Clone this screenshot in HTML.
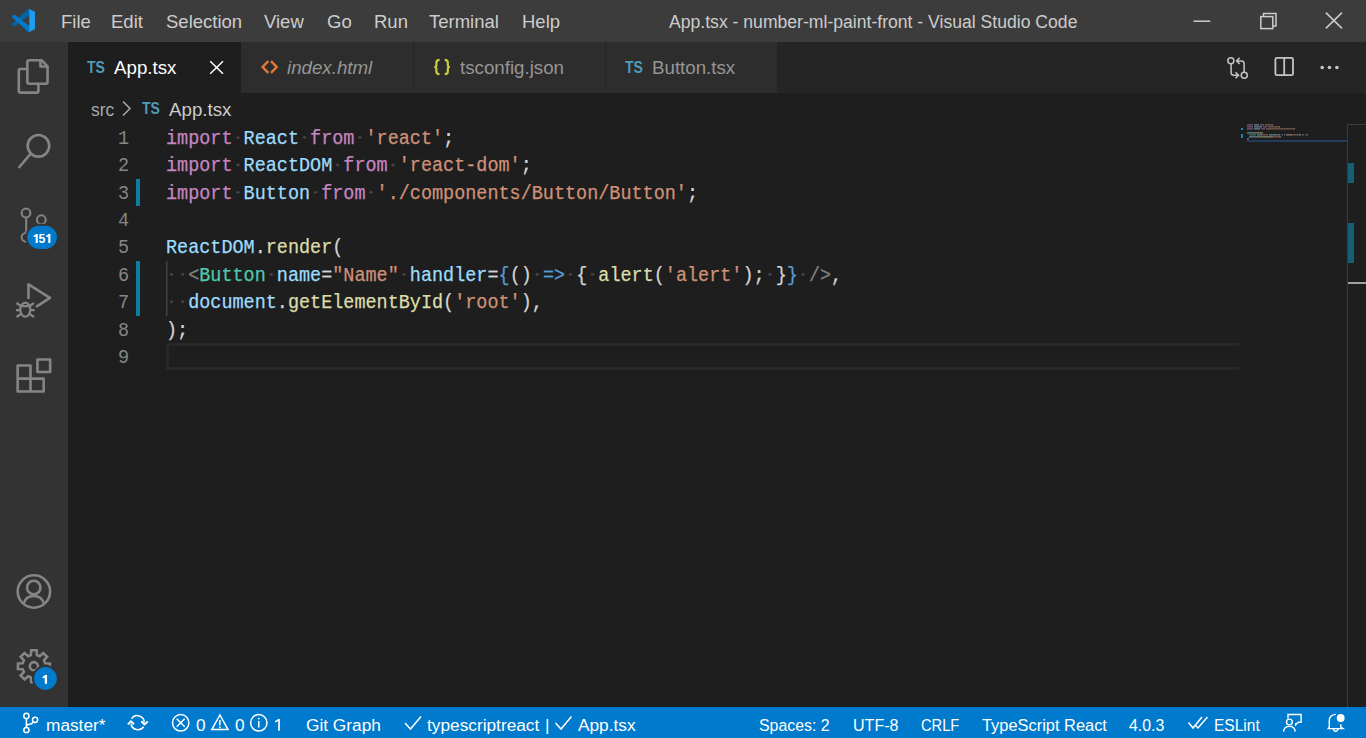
<!DOCTYPE html>
<html><head><meta charset="utf-8">
<style>
*{margin:0;padding:0;box-sizing:border-box}
html,body{width:1366px;height:738px;overflow:hidden;background:#1e1e1e;font-family:"Liberation Sans",sans-serif}
.a{position:absolute;white-space:pre}
.r{position:absolute}
.menu{position:absolute;top:11px;font-size:18.5px;line-height:22px;color:#cccccc;white-space:pre}
.tl{position:absolute;font-size:18.72px;line-height:22px;top:57px;color:#969696;white-space:pre}
.st{position:absolute;top:715px;font-size:17.28px;line-height:21px;color:#ffffff;white-space:pre;transform-origin:0 0}
.code{position:absolute;left:166px;top:125px;font-family:"Liberation Mono",monospace;font-size:20px;line-height:27.36px;white-space:pre;color:#d4d4d4;transform:scaleX(0.9233);transform-origin:0 0;-webkit-text-stroke:0.25px currentColor}
.ln{position:absolute;width:40px;left:88.5px;top:125px;text-align:right;font-family:"Liberation Mono",monospace;font-size:21px;line-height:27.36px;color:#858585;transform:scaleX(0.88);transform-origin:100% 0}
.k{color:#c586c0}.v{color:#9cdcfe}.s{color:#ce9178}.f{color:#dcdcaa}.t{color:#4ec9b0}.g{color:#808080}.b{color:#569cd6}
.w{color:rgba(227,228,226,0.16)}
</style></head><body>
<!-- title bar -->
<div class="r" style="left:0;top:0;width:1366px;height:42px;background:#3c3c3c"></div>
<div class="menu" style="left:61px">File</div>
<div class="menu" style="left:111px">Edit</div>
<div class="menu" style="left:166px">Selection</div>
<div class="menu" style="left:264px">View</div>
<div class="menu" style="left:327px">Go</div>
<div class="menu" style="left:374px">Run</div>
<div class="menu" style="left:429px">Terminal</div>
<div class="menu" style="left:522px">Help</div>
<div class="a" style="left:669px;top:12px;font-size:17.6px;line-height:21px;color:#cccccc">App.tsx - number-ml-paint-front - Visual Studio Code</div>

<!-- activity bar -->
<div class="r" style="left:0;top:42px;width:67px;height:665px;background:#333333"></div>
<div class="r" style="left:67px;top:42px;width:1px;height:665px;background:#353535"></div>

<!-- tabs -->
<div class="r" style="left:68px;top:42px;width:1298px;height:51px;background:#252526"></div>
<div class="r" style="left:68px;top:42px;width:173px;height:51px;background:#1e1e1e"></div>
<div class="r" style="left:241px;top:42px;width:172px;height:51px;background:#2d2d2d"></div>
<div class="r" style="left:414px;top:42px;width:191px;height:51px;background:#2d2d2d"></div>
<div class="r" style="left:606px;top:42px;width:171px;height:51px;background:#2d2d2d"></div>
<div class="a" style="left:87px;top:59px;font-size:16.5px;line-height:16px;font-weight:bold;color:#519aba;transform:scaleX(0.85);transform-origin:0 0">TS</div>
<div class="tl" style="left:114px;color:#ffffff">App.tsx</div>
<div class="tl" style="left:287px;font-style:italic">index.html</div>
<div class="tl" style="left:460px">tsconfig.json</div>
<div class="a" style="left:625px;top:59px;font-size:16.5px;line-height:16px;font-weight:bold;color:#519aba;transform:scaleX(0.85);transform-origin:0 0">TS</div>
<div class="tl" style="left:652px">Button.tsx</div>

<!-- breadcrumbs -->
<div class="a" style="left:91px;top:99px;font-size:18.72px;line-height:22px;color:#a9a9a9;transform:scaleX(0.93);transform-origin:0 0">src</div>
<div class="a" style="left:142px;top:100px;font-size:16.5px;line-height:16px;font-weight:bold;color:#519aba;transform:scaleX(0.85);transform-origin:0 0">TS</div>
<div class="a" style="left:169px;top:99px;font-size:18.72px;line-height:22px;color:#cccccc">App.tsx</div>

<!-- editor -->
<div class="r" style="left:136px;top:179px;width:4px;height:27px;background:#0c7d9d"></div>
<div class="r" style="left:136px;top:261px;width:4px;height:55px;background:#0c7d9d"></div>
<div class="r" style="left:166px;top:261px;width:1px;height:55px;background:#444444"></div><div class="r" style="left:167px;top:261px;width:1px;height:55px;background:#2e2e2e"></div>
<div class="r" style="left:166px;top:343px;width:1073px;height:27px;border:3px solid #282828;border-right:none"></div>
<div class="ln">1<br>2<br>3<br>4<br>5<br>6<br>7<br>8<br>9</div>
<div class="code"><span class="k">import</span> <span class="v">React</span> <span class="k">from</span> <span class="s">'react'</span>;
<span class="k">import</span> <span class="v">ReactDOM</span> <span class="k">from</span> <span class="s">'react-dom'</span>;
<span class="k">import</span> <span class="v">Button</span> <span class="k">from</span> <span class="s">'./components/Button/Button'</span>;

<span class="v">ReactDOM</span>.<span class="f">render</span>(
  <span class="g">&lt;</span><span class="t">Button</span> <span class="v">name</span>=<span class="s">"Name"</span> <span class="v">handler</span>=<span class="b">{</span>() <span class="b">=&gt;</span> { <span class="f">alert</span>(<span class="s">'alert'</span>); }<span class="b">}</span> <span class="g">/&gt;</span>,
  <span class="v">document</span>.<span class="f">getElementById</span>(<span class="s">'root'</span>),
);
</div>

<!-- minimap + overview ruler -->
<div class="r" style="left:1347px;top:124px;width:1px;height:583px;background:#3c3c3c"></div>
<div class="r" style="left:1347px;top:124px;width:19px;height:1px;background:#3c3c3c"></div>
<div class="r" style="left:1348px;top:163px;width:6px;height:20px;background:#155f75"></div>
<div class="r" style="left:1348px;top:223px;width:6px;height:40px;background:#155f75"></div>
<div class="r" style="left:1348px;top:282px;width:18px;height:2px;background:#a0a0a0"></div>
<div class="r" style="left:1241px;top:128px;width:2px;height:2px;background:#1489b8"></div>
<div class="r" style="left:1241px;top:134px;width:2px;height:4px;background:#1489b8"></div>
<div class="r" style="left:1247px;top:140px;width:100px;height:2px;background:#223d5a"></div>

<!-- status bar -->
<div class="r" style="left:0;top:707px;width:1366px;height:31px;background:#007acc"></div>
<div class="st" style="left:46px">master*</div>
<div class="st" style="left:196px">0</div>
<div class="st" style="left:235px">0</div>
<div class="st" style="left:306px">Git Graph</div>
<div class="st" style="left:427px">typescriptreact</div>
<div class="st" style="left:545px">|</div>
<div class="st" style="left:578px">App.tsx</div>
<div class="st" style="left:759px;transform:scaleX(0.92)">Spaces: 2</div>
<div class="st" style="left:853px;transform:scaleX(0.93)">UTF-8</div>
<div class="st" style="left:921px;transform:scaleX(0.85)">CRLF</div>
<div class="st" style="left:982px;transform:scaleX(0.95)">TypeScript React</div>
<div class="st" style="left:1129px;transform:scaleX(0.92)">4.0.3</div>
<div class="st" style="left:1214px;transform:scaleX(0.9)">ESLint</div>

<svg class="r" style="left:0;top:0" width="1366" height="738" viewBox="0 0 1366 738">
 <!-- vscode logo -->
 <g transform="translate(12,9) scale(0.23)">
  <path fill="#0065A9" d="M96.4614 10.7962L75.8569 0.875542C73.4719 -0.272773 70.6217 0.211611 68.75 2.08333L1.29858 63.5832C-0.515693 65.2373 -0.513607 68.0937 1.30308 69.7452L6.81272 74.754C8.29793 76.1042 10.5347 76.2036 12.1338 74.9905L93.3609 13.3699C96.0859 11.3026 100 13.2462 100 16.6667V16.4275C100 14.0265 98.6246 11.8378 96.4614 10.7962Z"/>
  <path fill="#007ACC" d="M96.4614 89.2038L75.8569 99.1245C73.4719 100.273 70.6217 99.7884 68.75 97.9167L1.29858 36.4169C-0.515693 34.7627 -0.513607 31.9063 1.30308 30.2548L6.81272 25.246C8.29793 23.8958 10.5347 23.7964 12.1338 25.0095L93.3609 86.6301C96.0859 88.6974 100 86.7538 100 83.3334V83.5726C100 85.9735 98.6246 88.1622 96.4614 89.2038Z"/>
  <path fill="#1F9CF0" d="M75.8578 99.1263C73.4721 100.274 70.6219 99.7885 68.75 97.9166C71.0564 100.223 75 98.5895 75 95.3278V4.67213C75 1.41039 71.0564 -0.223106 68.75 2.08329C70.6219 0.211402 73.4721 -0.273666 75.8578 0.873633L96.4587 10.7807C98.6234 11.8217 100 14.0112 100 16.4132V83.5871C100 85.9891 98.6234 88.1786 96.4586 89.2196L75.8578 99.1263Z"/>
 </g>
 <!-- window controls -->
 <g stroke="#cccccc" stroke-width="1.5" fill="none">
  <path d="M1193.5 21.2H1210.3"/>
  <rect x="1260.8" y="16.6" width="12" height="12"/>
  <path d="M1263.5 16.6V13.6H1276V26H1272.8"/>
  <path d="M1325.8 12.6L1342 28.4M1342 12.6L1325.8 28.4"/>
 </g>
 <!-- activity icons -->
 <g stroke="#858585" stroke-width="2.6" fill="none" stroke-linejoin="round">
  <path d="M27.35 62Q27.35 60.25 29 60.25H41.5L47.55 66.3V82Q47.55 83.75 45.8 83.75H29Q27.35 83.75 27.35 82Z"/>
  <path d="M40.4 60.25V66.5H47.55"/>
  <path d="M27.35 69H20.5Q18.8 69 18.8 70.7V90.9Q18.8 92.6 20.5 92.6H36.7Q38.4 92.6 38.4 90.9V83.75"/>
  <circle cx="38.45" cy="145.85" r="10.8"/>
  <path d="M30.5 153.8L18.6 168"/>
  <path d="M28.5 299V284.3L50 297.8L36 306.8"/>
  <path d="M17.65 365.45H30.5V391.45H17.65Z M30.5 378.6H43.65V391.45H30.5 M17.65 378.6H30.5"/>
  <rect x="37.45" y="359.55" width="12.7" height="12.4"/>
  <circle cx="33.9" cy="591.5" r="16.2"/>
  <circle cx="33.75" cy="587.5" r="6.7"/>
  <path d="M23.7 603.4Q26 596 33.8 596Q41.6 596 43.9 603.4"/>
 </g>
 <g stroke="#858585" stroke-width="2" fill="none">
  <circle cx="26" cy="213" r="4.4"/>
  <circle cx="41.35" cy="219.75" r="4.4"/>
  <circle cx="26" cy="237.3" r="4.4"/>
  <path d="M26.2 217.4V232.9"/>
  <path d="M41.35 224.2Q41.35 230 30 233"/>
 </g>
 <!-- bug -->
 <g stroke="#858585" stroke-width="2.2" fill="none">
  <ellipse cx="25.3" cy="309.6" rx="5" ry="7"/>
  <path d="M20.3 306.2H30.3 M16 310.1H20.3 M30.3 310.1H34.6 M16.5 303L21 306 M34.1 303L29.6 306 M16.5 317L21 314 M34.1 317L29.6 314"/>
 </g>
 <!-- gear -->
 <g stroke="#858585" stroke-width="2.6" fill="none" stroke-linejoin="miter">
  <path d="M30.92 654.99L31.16 650.23L36.64 650.23L36.88 654.99L39.72 656.16L43.25 652.97L47.13 656.85L43.94 660.38L45.11 663.22L49.87 663.46L49.87 668.94L45.11 669.18L43.94 672.02L47.13 675.55L43.25 679.43L39.72 676.24L36.88 677.41L36.64 682.17L31.16 682.17L30.92 677.41L28.08 676.24L24.55 679.43L20.67 675.55L23.86 672.02L22.69 669.18L17.93 668.94L17.93 663.46L22.69 663.22L23.86 660.38L20.67 656.85L24.55 652.97L28.08 656.16Z"/>
  <circle cx="33.9" cy="666.2" r="4.1"/>
 </g>
 <!-- badges -->
 <rect x="26.3" y="224.7" width="31.6" height="25.3" rx="12.65" fill="#007acc" stroke="#333333" stroke-width="2"/>
 <path d="M36.7 234.1V242.9M49.35 234.1V242.9" stroke="#ffffff" stroke-width="2.1"/><path d="M36.9 234.6L33.8 236.6M49.55 234.6L46.4 236.6" stroke="#ffffff" stroke-width="1.7"/>
 <text x="42" y="242.9" style="font-family:'Liberation Sans',sans-serif;font-weight:bold;font-size:12.3px" fill="#ffffff" text-anchor="middle">5</text>
 <circle cx="45.45" cy="678.45" r="12.4" fill="#007acc" stroke="#333333" stroke-width="2"/>
 <path d="M45.9 675V683.8" stroke="#ffffff" stroke-width="2.3"/><path d="M46.1 675.5L42.9 677.8" stroke="#ffffff" stroke-width="1.8"/>

 <!-- tab close -->
 <path d="M210.2 61.2L223 73.8M223 61.2L210.2 73.8" stroke="#ffffff" stroke-width="1.5"/>
 <!-- html icon -->
 <path d="M268.3 61.2L262.6 67L268.3 72.8M271 61.2L276.7 67L271 72.8" stroke="#e37933" stroke-width="2.4" fill="none"/>
 <!-- json braces -->
 <g stroke="#cbcb41" stroke-width="2.2" fill="none">
  <path d="M439.5 59.8Q436.4 59.8 436.4 62.5V65Q436.4 67 434.3 67Q436.4 67 436.4 69V71.5Q436.4 74.2 439.5 74.2"/>
  <path d="M444.7 59.8Q447.8 59.8 447.8 62.5V65Q447.8 67 449.9 67Q447.8 67 447.8 69V71.5Q447.8 74.2 444.7 74.2"/>
 </g>
 <!-- breadcrumb chevron -->
 <path d="M123 101.5L130 108.5L123 115.5" stroke="#a9a9a9" stroke-width="1.5" fill="none"/>
 <!-- editor actions -->
 <g stroke="#c5c5c5" stroke-width="1.5" fill="none">
  <circle cx="1230.85" cy="60.85" r="3"/>
  <circle cx="1244.25" cy="75.35" r="3"/>
  <path d="M1231.1 63.9V72.5Q1231.1 75.2 1233.8 75.2H1238.6 M1235.5 72.2L1238.6 75.2L1235.5 78.3"/>
  <path d="M1244.1 72.3V63.6Q1244.1 60.9 1241.4 60.9H1236.6 M1239.6 57.8L1236.6 60.9L1239.6 64"/>
  <rect x="1275.4" y="57.9" width="17.6" height="17.3" rx="1.5" stroke-width="1.8"/>
  <path d="M1284.2 57.9V75.2" stroke-width="1.8"/>
 </g>
 <g fill="#c5c5c5">
  <circle cx="1322.2" cy="67.5" r="1.8"/><circle cx="1329.5" cy="67.5" r="1.8"/><circle cx="1336.9" cy="67.5" r="1.8"/>
 </g>
 <!-- status icons -->
 <g stroke="#ffffff" stroke-width="1.5" fill="none">
  <circle cx="26.4" cy="715.9" r="2.6"/>
  <circle cx="26.4" cy="730" r="2.6"/>
  <circle cx="35.1" cy="719.8" r="2.6"/>
  <path d="M26.4 718.5V727.4 M33.4 721.8Q32 724.3 28 724.5L26.4 725.5"/>
  <path d="M131.6 718.6A7 7 0 0 1 144.3 722.2"/><path d="M141.3 721.2L144.4 724.4L147.8 721.4" stroke-width="2"/>
  <path d="M143.6 726.8A7 7 0 0 1 131 724"/><path d="M127.9 724.4L130.9 721.3L134 724.2" stroke-width="2"/>
  <circle cx="180.7" cy="722.8" r="8.2"/>
  <path d="M176.7 718.8L184.7 726.8M184.7 718.8L176.7 726.8"/>
  <path d="M219.9 715L211.8 729.6H228L219.9 715Z"/>
  <path d="M219.9 720V725.5"/>
  <circle cx="258.8" cy="722.8" r="8.2"/>
  <path d="M258.8 721V727.5"/>
  <path d="M405 723L410.5 729L421 716.6 M555.5 723L561 729L571.5 716.6"/>
  <path d="M1188.5 722.5L1193 728L1202 717 M1195.5 725.5L1198 728L1207.5 717"/>
 </g>
 <g fill="#ffffff">
  <rect x="219.1" y="726.6" width="1.6" height="1.6"/>
  <circle cx="258.8" cy="718.6" r="0.95"/>
 </g>
 <path d="M279 719.1V730.7" stroke="#ffffff" stroke-width="1.7"/><path d="M279.3 719.5L275.1 721.8" stroke="#ffffff" stroke-width="1.5"/>
 <!-- feedback -->
 <g stroke="#ffffff" stroke-width="1.4" fill="none">
  <circle cx="1289.4" cy="722" r="2.9"/>
  <path d="M1283.6 731.6Q1284 726.4 1289.4 726.4Q1294.8 726.4 1295.2 731.6"/>
  <path d="M1288 718.6V714.5H1301.1V722.2H1298.2L1295.7 724.8V723"/>
 </g>
 <!-- bell -->
 <g stroke="#ffffff" stroke-width="1.4" fill="none">
  <path d="M1335.8 714.4Q1329.3 715 1329.3 720.6V727.3L1328.3 728.6H1342.9L1340.8 727.2V724.2"/>
  <path d="M1333.4 729Q1333.7 731.2 1335.6 731.2Q1337.6 731.2 1337.9 729"/>
 </g>
 <circle cx="1340.7" cy="718" r="3.9" fill="#ffffff"/>
<g opacity="0.42"><rect x="1247" y="124" width="6" height="1.6" fill="#c586c0"/><rect x="1254" y="124" width="5" height="1.6" fill="#9cdcfe"/><rect x="1260" y="124" width="4" height="1.6" fill="#c586c0"/><rect x="1265" y="124" width="7" height="1.6" fill="#ce9178"/><rect x="1272" y="124" width="1" height="1.6" fill="#d4d4d4"/><rect x="1247" y="126" width="6" height="1.6" fill="#c586c0"/><rect x="1254" y="126" width="8" height="1.6" fill="#9cdcfe"/><rect x="1263" y="126" width="4" height="1.6" fill="#c586c0"/><rect x="1268" y="126" width="11" height="1.6" fill="#ce9178"/><rect x="1279" y="126" width="1" height="1.6" fill="#d4d4d4"/><rect x="1247" y="128" width="6" height="1.6" fill="#c586c0"/><rect x="1254" y="128" width="6" height="1.6" fill="#9cdcfe"/><rect x="1261" y="128" width="4" height="1.6" fill="#c586c0"/><rect x="1266" y="128" width="28" height="1.6" fill="#ce9178"/><rect x="1294" y="128" width="1" height="1.6" fill="#d4d4d4"/><rect x="1247" y="132" width="8" height="1.6" fill="#9cdcfe"/><rect x="1255" y="132" width="1" height="1.6" fill="#d4d4d4"/><rect x="1256" y="132" width="6" height="1.6" fill="#dcdcaa"/><rect x="1262" y="132" width="1" height="1.6" fill="#d4d4d4"/><rect x="1249" y="134" width="1" height="1.6" fill="#808080"/><rect x="1250" y="134" width="6" height="1.6" fill="#4ec9b0"/><rect x="1257" y="134" width="4" height="1.6" fill="#9cdcfe"/><rect x="1261" y="134" width="1" height="1.6" fill="#d4d4d4"/><rect x="1262" y="134" width="6" height="1.6" fill="#ce9178"/><rect x="1269" y="134" width="7" height="1.6" fill="#9cdcfe"/><rect x="1276" y="134" width="1" height="1.6" fill="#d4d4d4"/><rect x="1277" y="134" width="1" height="1.6" fill="#569cd6"/><rect x="1278" y="134" width="2" height="1.6" fill="#d4d4d4"/><rect x="1281" y="134" width="2" height="1.6" fill="#569cd6"/><rect x="1284" y="134" width="1" height="1.6" fill="#d4d4d4"/><rect x="1286" y="134" width="5" height="1.6" fill="#dcdcaa"/><rect x="1291" y="134" width="1" height="1.6" fill="#d4d4d4"/><rect x="1292" y="134" width="7" height="1.6" fill="#ce9178"/><rect x="1299" y="134" width="2" height="1.6" fill="#d4d4d4"/><rect x="1302" y="134" width="1" height="1.6" fill="#d4d4d4"/><rect x="1303" y="134" width="1" height="1.6" fill="#569cd6"/><rect x="1305" y="134" width="2" height="1.6" fill="#808080"/><rect x="1307" y="134" width="1" height="1.6" fill="#d4d4d4"/><rect x="1249" y="136" width="8" height="1.6" fill="#9cdcfe"/><rect x="1257" y="136" width="1" height="1.6" fill="#d4d4d4"/><rect x="1258" y="136" width="14" height="1.6" fill="#dcdcaa"/><rect x="1272" y="136" width="1" height="1.6" fill="#d4d4d4"/><rect x="1273" y="136" width="6" height="1.6" fill="#ce9178"/><rect x="1279" y="136" width="2" height="1.6" fill="#d4d4d4"/><rect x="1247" y="138" width="2" height="1.6" fill="#d4d4d4"/></g>
<g fill="#444444"><ellipse cx="238.0" cy="137.6" rx="1.7" ry="1.4"/><ellipse cx="304.5" cy="137.6" rx="1.7" ry="1.4"/><ellipse cx="359.9" cy="137.6" rx="1.7" ry="1.4"/><ellipse cx="238.0" cy="165.0" rx="1.7" ry="1.4"/><ellipse cx="337.7" cy="165.0" rx="1.7" ry="1.4"/><ellipse cx="393.1" cy="165.0" rx="1.7" ry="1.4"/><ellipse cx="238.0" cy="192.3" rx="1.7" ry="1.4"/><ellipse cx="315.6" cy="192.3" rx="1.7" ry="1.4"/><ellipse cx="371.0" cy="192.3" rx="1.7" ry="1.4"/><ellipse cx="171.5" cy="274.4" rx="1.7" ry="1.4"/><ellipse cx="182.6" cy="274.4" rx="1.7" ry="1.4"/><ellipse cx="271.3" cy="274.4" rx="1.7" ry="1.4"/><ellipse cx="404.2" cy="274.4" rx="1.7" ry="1.4"/><ellipse cx="537.2" cy="274.4" rx="1.7" ry="1.4"/><ellipse cx="570.4" cy="274.4" rx="1.7" ry="1.4"/><ellipse cx="592.6" cy="274.4" rx="1.7" ry="1.4"/><ellipse cx="769.9" cy="274.4" rx="1.7" ry="1.4"/><ellipse cx="803.1" cy="274.4" rx="1.7" ry="1.4"/><ellipse cx="171.5" cy="301.8" rx="1.7" ry="1.4"/><ellipse cx="182.6" cy="301.8" rx="1.7" ry="1.4"/></g>
</svg>
</body></html>
